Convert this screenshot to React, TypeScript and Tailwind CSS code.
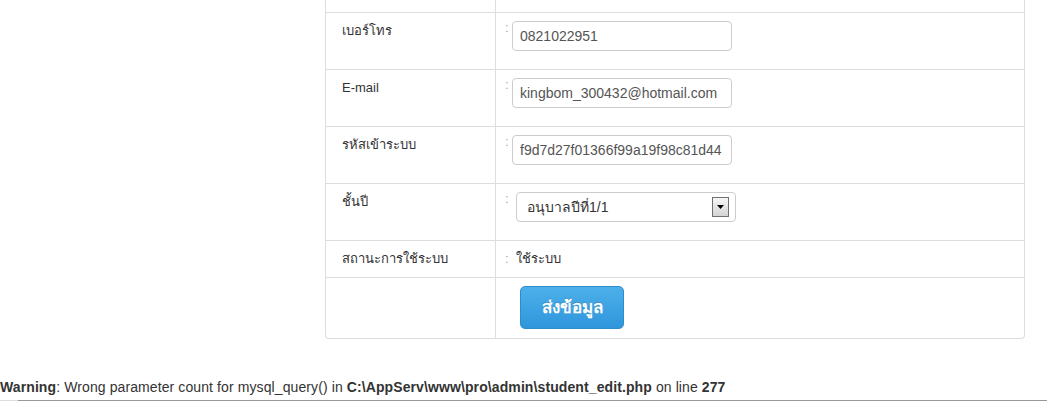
const font = { fontFamily: '"Liberation Sans", Arial, "Noto Sans", sans-serif' };

function Colon({ top = true }: { top?: boolean }) {
  return (
    <span
      className={`w-[7px] shrink-0 text-[13px] text-[#aaa] ${top ? 'mt-[1px] leading-[12px]' : 'leading-[20px]'}`}
    >
      :
    </span>
  );
}

function Row({ label, children }: { label?: string; children: React.ReactNode }) {
  return (
    <div className="flex border-t border-[#ddd]">
      <div className="w-[169px] shrink-0 pl-4 pt-2 text-[13px] leading-[20px] text-[#333]">{label}</div>
      <div className="flex flex-1 border-l border-[#ddd] pb-2 pl-[9px] pt-2">{children}</div>
    </div>
  );
}

function TextInput({ value }: { value: string }) {
  return (
    <div className="mb-[10px] h-[30px] w-[220px] overflow-hidden whitespace-nowrap rounded-[4px] border border-[#ccc] bg-white pl-[7px] pr-[5px] text-[14px] leading-[28px] text-[#555]">
      {value}
    </div>
  );
}

export default function App() {
  return (
    <div className="h-[403px] w-[1047px] overflow-hidden bg-white text-[#333]" style={font}>
      <div className="ml-[325px] w-[700px] rounded-b-[4px] border-x border-b border-[#ddd]">
        {/* top of previous row, cut by the screenshot */}
        <div className="flex h-[12px]">
          <div className="w-[169px] shrink-0" />
          <div className="flex-1 border-l border-[#ddd]" />
        </div>

        <Row label="เบอร์โทร">
          <Colon />
          <TextInput value="0821022951" />
        </Row>

        <Row label="E-mail">
          <Colon />
          <TextInput value="kingbom_300432@hotmail.com" />
        </Row>

        <Row label="รหัสเข้าระบบ">
          <Colon />
          <TextInput value="f9d7d27f01366f99a19f98c81d44" />
        </Row>

        <Row label="ชั้นปี">
          <Colon />
          <div className="mb-[10px] ml-[4px] flex h-[30px] w-[220px] items-center justify-between rounded-[4px] border border-[#ccc] bg-white pl-[10px] pr-[6px] text-[14px] text-[#333]">
            <span>อนุบาลปีที่1/1</span>
            <div className="flex h-[20px] w-[17px] items-center justify-center border border-[#707070] bg-gradient-to-b from-[#f6f6f6] to-[#d4d4d4]">
              <svg width="7" height="4" viewBox="0 0 7 4">
                <path d="M0 0h7L3.5 4z" fill="#000" />
              </svg>
            </div>
          </div>
        </Row>

        <Row label="สถานะการใช้ระบบ">
          <Colon top={false} />
          <span className="ml-[4px] text-[13px] leading-[20px] text-[#333]">ใช้ระบบ</span>
        </Row>

        <Row>
          <div className="pb-px pl-[15px]">
            <button className="flex h-[43px] w-[104px] items-center justify-center rounded-[5px] border border-[#2d8ccc] bg-gradient-to-b from-[#4cb0ea] to-[#2f96dc] text-[17px] font-bold text-white [text-shadow:0_-1px_0_rgba(0,0,0,0.2)]">
              ส่งข้อมูล
            </button>
          </div>
        </Row>
      </div>

      <div className="mt-[40px] whitespace-nowrap text-[14px] leading-[16px] tracking-[0.1px] text-[#333]">
        <b>Warning</b>: Wrong parameter count for mysql_query() in <b>C:\AppServ\www\pro\admin\student_edit.php</b> on line <b>277</b>
      </div>
      <div className="mt-[5px] flex h-[2px]">
        <div className="w-[18px] border-t border-[#ddd]" />
        <div className="flex-1 border-t border-[#999]" />
      </div>
    </div>
  );
}
